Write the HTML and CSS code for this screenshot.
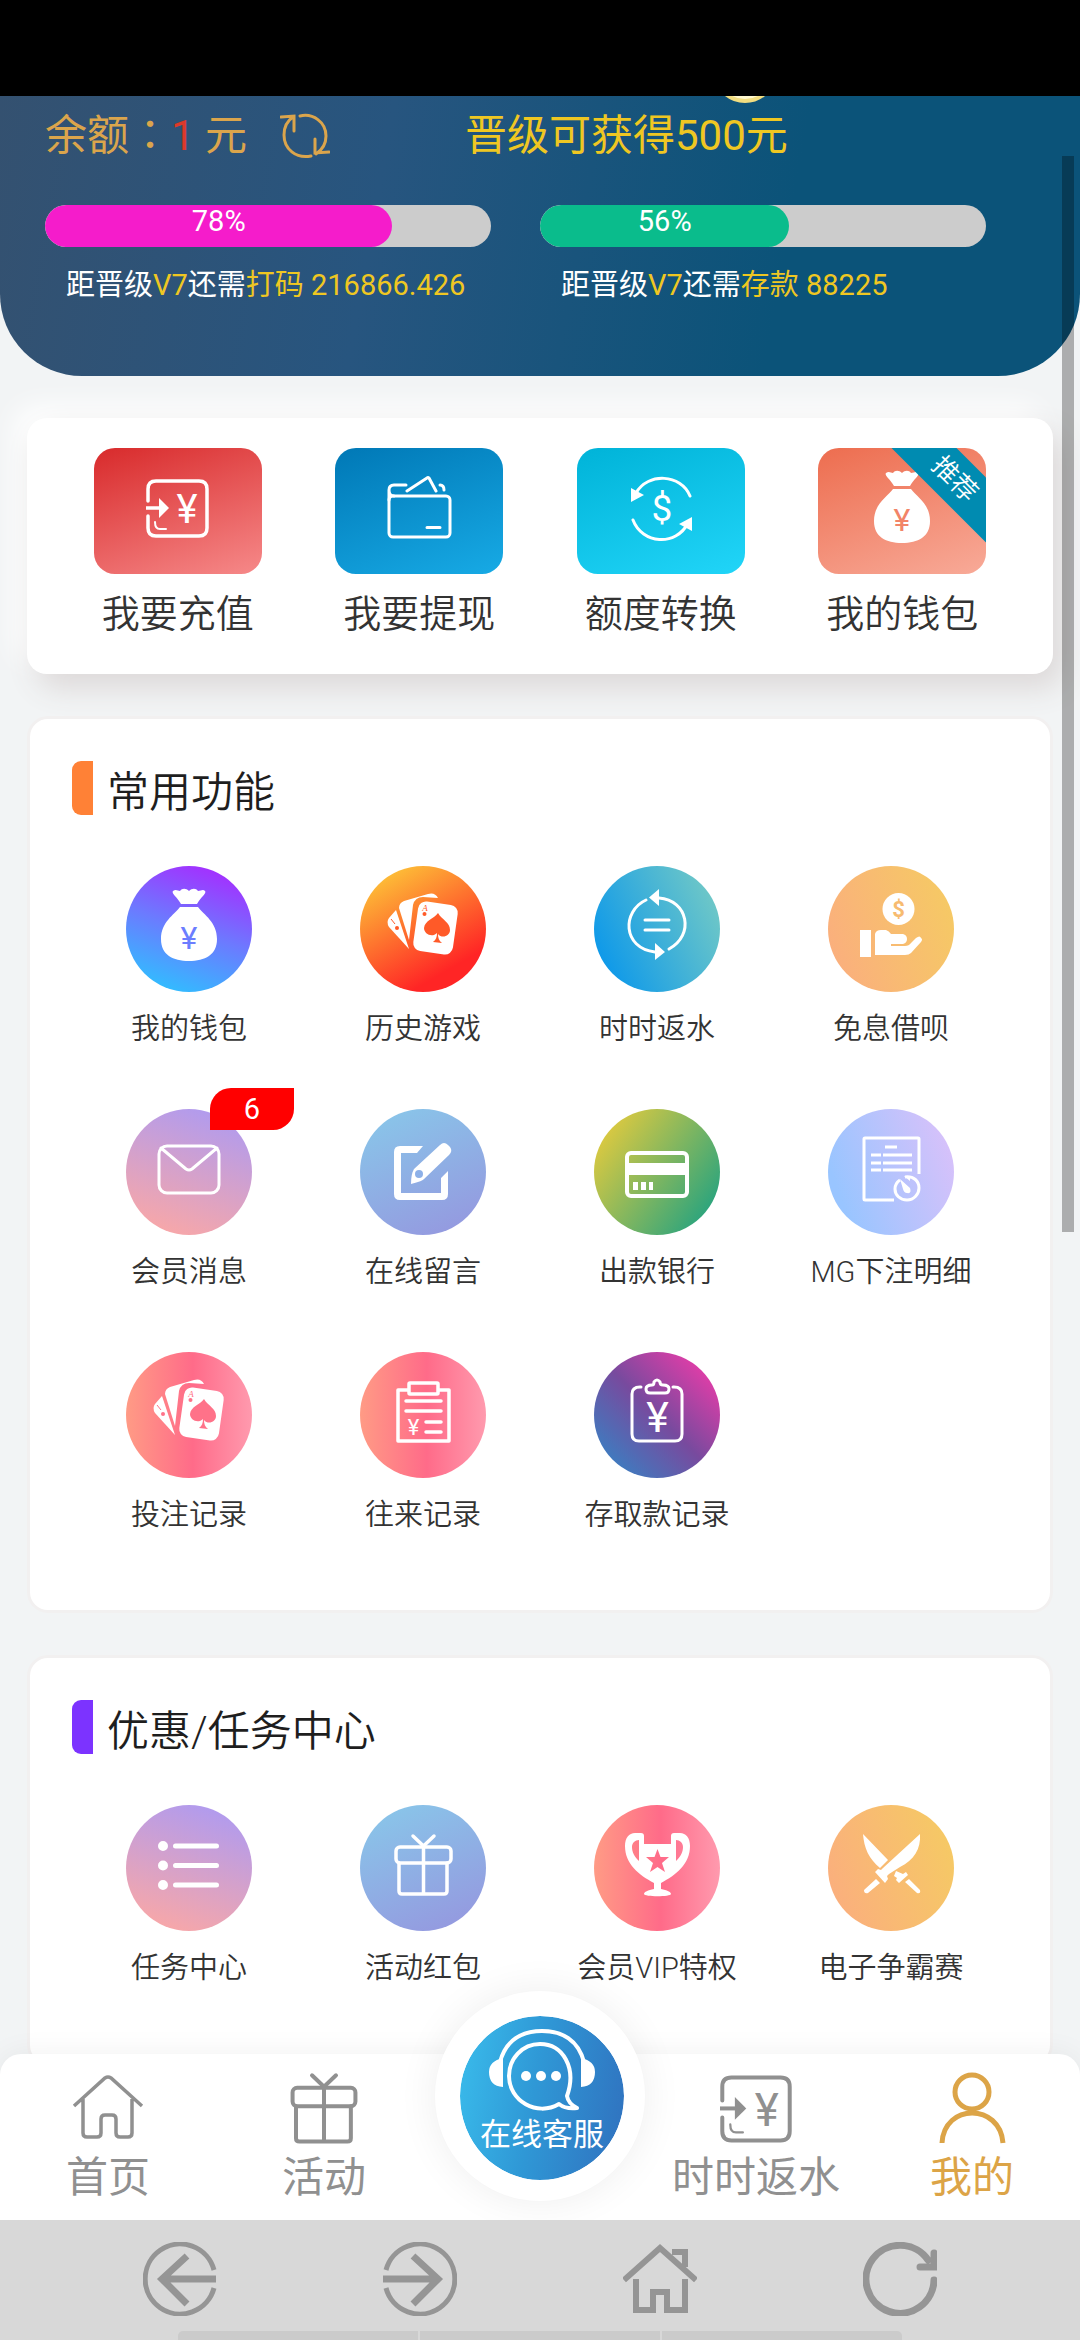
FILE: index.html
```html
<!DOCTYPE html>
<html lang="zh-CN">
<head>
  <meta charset="UTF-8">
  <meta name="viewport" content="width=device-width, initial-scale=1.0">
  <title>我的</title>
  <link rel="stylesheet" href="styles.css">
</head>
<body>
  <!-- 公用图标 -->
  <svg class="defs" aria-hidden="true">
    <defs>
      <g id="i-bag">
        <path class="fill" d="M47 25c3-2 5 0 7 0 2-3 6-3 9 0 3-3 7-3 9 0 3 0 5-2 7 0 2 2-4 6-8 13H55c-4-7-10-11-8-13z"/>
        <path class="fill" d="M54 41h18c6 8 19 15 19 32 0 16-12 22-28 22s-28-6-28-22c0-17 13-24 19-32z"/>
        <text class="cut" x="63" y="83" font-size="32" text-anchor="middle">¥</text>
      </g>
      <g id="i-cards">
        <path class="fill" d="M36 44l13 39-20-22q-3-5 0-9z"/>
        <path class="fill" d="M39 42q0-5 5-7l24-7q7-2 10 4l-15-1q-8 0-10 8l-4 35z"/>
        <rect class="fill" x="55.500" y="37" width="40" height="50" rx="8" transform="rotate(8 75.500 62)"/>
        <path class="cut" d="M78 47c4 7 12 9 12 17 0 6-8 9-12 4 0 4 1 7 4 9l-9-1c3-2 4-5 4-9-5 5-13 1-13-5 1-8 10-9 14-15z"/>
        <circle class="cut" cx="64.500" cy="48" r="2"/>
        <text class="cut serif" x="65" y="45" font-size="9" text-anchor="middle">A</text>
        <circle class="cut" cx="37" cy="62" r="2"/>
        <path d="M31 53l4 5" stroke="var(--cut)" stroke-width="1"/>
      </g>
      <g id="i-yencard" class="line">
        <path d="M33 53V41q0-8 8-8h43q8 0 8 8v39q0 8-8 8H41q-8 0-8-8V68"/>
        <path d="M31 60h14" stroke-linecap="butt"/>
        <path class="fill" stroke="none" d="M44 50l10 10-10 10z"/>
        <path d="M40 74q0 7 5 7h6" stroke-width="2"/>
        <text class="fill" stroke="none" x="72" y="75" font-size="40" text-anchor="middle">¥</text>
      </g>
      <g id="i-gift" class="line">
        <rect x="36" y="42" width="55" height="16" rx="4"/>
        <path d="M39 58v28q0 3 3 3h42q3 0 3-3V58M63.500 42v47M53 31l10.500 10L74 31"/>
      </g>
    </defs>
  </svg>

  <div class="app">
    <div class="status-bar"></div>

    <main class="content">
      <section class="vip">
        <div class="vip-coin"></div>
        <div class="vip-top">
          <div class="balance">
            <span>余额<span class="colon" lang="ja">：</span><b>1</b> 元</span>
            <button class="refresh" aria-label="刷新">
              <svg width="50" height="46" viewBox="0 0 50 46"><path d="M20 3c13-3 26 6 26 20 0 8-4 14-10 18M49 39l-14 1V26M31 43C16 46 4 36 4 22 4 14 7 8 13 4M1 4l13-1v15"/></svg>
            </button>
          </div>
          <div class="reward">晋级可获得500元</div>
        </div>
        <div class="vip-levels">
          <div class="level">
            <div class="bar"><div class="bar-in pink" style="width:78%">78%</div></div>
            <p>距晋级<em>V7</em>还需<em>打码 216866.426</em></p>
          </div>
          <div class="level">
            <div class="bar"><div class="bar-in green" style="width:56%">56%</div></div>
            <p>距晋级<em>V7</em>还需<em>存款 88225</em></p>
          </div>
        </div>
      </section>

      <nav class="quick">
        <a href="#"><span class="tile t-red"><svg viewBox="0 0 126 126"><use href="#i-yencard"/></svg></span>我要充值</a>
        <a href="#"><span class="tile t-blue"><svg viewBox="0 0 126 126">
          <g class="line thin"><rect x="33" y="48" width="61" height="41" rx="4"/><path d="M33 52V42q0-5 5-5h12M33 42q0 6 5 6M51 43l20-13q1-1 2 0l7 13M84 37q4 0 4 5M71 79.500h13"/></g></svg></span>我要提现</a>
        <a href="#"><span class="tile t-cyan"><svg viewBox="0 0 126 126">
          <g class="line thin"><path d="M92 48C83 26 50 24 38 45M35 72c9 24 43 27 55 3"/></g>
          <path class="fill" d="M33 40v14l13-7zM94 69v14l-13-7z"/>
          <text class="fill" x="64" y="73" font-size="37" text-anchor="middle">$</text></svg></span>额度转换</a>
        <a href="#"><span class="tile t-coral"><svg viewBox="0 0 126 126"><use href="#i-bag"/></svg><i class="ribbon">推荐</i></span>我的钱包</a>
      </nav>

      <section class="card">
        <h2 class="orange">常用功能</h2>
        <ul class="grid">
          <li><a href="#"><span class="icon c-purple"><svg viewBox="0 0 126 126"><use href="#i-bag"/></svg></span>我的钱包</a></li>
          <li><a href="#"><span class="icon c-fire"><svg viewBox="0 0 126 126"><use href="#i-cards"/></svg></span>历史游戏</a></li>
          <li><a href="#"><span class="icon c-sea"><svg viewBox="0 0 126 126">
            <g class="line thin"><path d="M52 34C28 45 28 82 61 86M65 32c29 2 36 37 10 51M51 54h24M51 64h24"/></g>
            <path class="fill" d="M55 31.500L65 23v17zM71 86l-10-9v17z"/></svg></span>时时返水</a></li>
          <li><a href="#"><span class="icon c-gold"><svg viewBox="0 0 126 126">
            <circle class="fill" cx="70.500" cy="43" r="16"/>
            <text class="cut bold" x="70.500" y="51" font-size="22" text-anchor="middle">$</text>
            <path class="fill" d="M32 64h11v27H32zM47 89V68q1-4 6-4h5q3 1 5 4h12q4 1 4 5t-4 5H63v2h14q4 0 6-3l5-5q4-3 5 0 2 1 0 4L83 87q-2 2-6 2z"/></svg></span>免息借呗</a></li>
          <li><a href="#"><span class="icon c-rose"><svg viewBox="0 0 126 126">
            <g class="line thin"><rect x="33" y="37" width="60" height="47" rx="8"/><path d="M35 39l25 21q3 2 6 0l25-21"/></g></svg><i class="badge">6</i></span>会员消息</a></li>
          <li><a href="#"><span class="icon c-sky"><svg viewBox="0 0 126 126">
            <path class="fill" d="M63 37l-6 7H41v40h40V69l7-7v23q0 6-6 6H40q-6 0-6-6V43q0-6 6-6z"/>
            <path class="fill" d="M54 60l26-24q4-4 8 0l2 2q3 4-1 8L64 70q-1 2-13 5 0-10 3-15z"/>
            <circle class="cut" cx="59" cy="65" r="4"/></svg></span>在线留言</a></li>
          <li><a href="#"><span class="icon c-lime"><svg viewBox="0 0 126 126">
            <rect x="33" y="44" width="60" height="43" rx="4" fill="none" stroke="#fff" stroke-width="4"/>
            <path class="fill" d="M32 54h62v12H32zM39 73h5v8h-5zM47 73h5v8h-5zM55 73h4v8h-4z"/></svg></span>出款银行</a></li>
          <li><a href="#"><span class="icon c-lilac"><svg viewBox="0 0 126 126">
            <g class="line thin square"><path d="M66 91H37q-1 0-1-1V30q0-1 1-1h53q1 0 1 1v35M57 38h12M43 46h10M55 46h29M43 54h10M55 54h29M43 61h10M55 61h29M77 68c9-1 14 4 14 11 0 6-5 12-12 12s-12-5-12-11c0-4 2-7 5-9"/></g>
            <path class="fill" d="M72 70l10 9q2 6-3 5-3 0-4-4zM76 67h6v5z"/></svg></span>MG下注明细</a></li>
          <li><a href="#"><span class="icon c-pink"><svg viewBox="0 0 126 126"><use href="#i-cards"/></svg></span>投注记录</a></li>
          <li><a href="#"><span class="icon c-pink"><svg viewBox="0 0 126 126">
            <g class="line"><path d="M48 38H38v51h51V38H79"/><rect x="49" y="31" width="29" height="11" rx="1"/><path d="M46 49h35M46 59h35M66 70h15M66 80h15"/></g>
            <text class="fill" x="53.500" y="83" font-size="22" text-anchor="middle">¥</text></svg></span>往来记录</a></li>
          <li><a href="#"><span class="icon c-night"><svg viewBox="0 0 126 126">
            <g class="line thin"><path d="M47 35h-1q-8 0-8 7v40q0 7 7 7h36q7 0 7-7V42q0-7-8-7h-1"/><path d="M56 41q-4 0-4-4t6-4q2 0 2-3 3-4 6 0 0 3 3 3 6 0 6 4t-4 4z"/></g>
            <text class="fill" x="63.500" y="80" font-size="43" text-anchor="middle">¥</text></svg></span>存取款记录</a></li>
        </ul>
      </section>

      <section class="card">
        <h2 class="violet">优惠/任务中心</h2>
        <ul class="grid">
          <li><a href="#"><span class="icon c-rose"><svg viewBox="0 0 126 126">
            <path class="fill" d="M32 41a5 5 0 1 1 10 0a5 5 0 1 1-10 0M32 60.500a5 5 0 1 1 10 0a5 5 0 1 1-10 0M32 80a5 5 0 1 1 10 0a5 5 0 1 1-10 0"/>
            <path d="M49.500 41h41M49.500 60.500h41M49.500 80h41" stroke="#fff" stroke-width="5" stroke-linecap="round"/></svg></span>任务中心</a></li>
          <li><a href="#"><span class="icon c-sky"><svg viewBox="0 0 126 126"><use href="#i-gift"/></svg></span>活动红包</a></li>
          <li><a href="#"><span class="icon c-pink"><svg viewBox="0 0 126 126">
            <path class="fill" fill-rule="evenodd" d="M50 39v-8q0-3-3-3h-6c-6 0-10 5-10 13 0 18 14 29 29 37v6c-6 1-10 3-10 5 0 3 27 3 27 0 0-2-4-4-10-5v-6c15-8 29-19 29-37 0-8-4-13-10-13h-6q-3 0-3 3v8zM45 35v21c-5-5-7-9-7-14 0-4 3-7 7-7zM82 35v21c5-5 7-9 7-14 0-4-3-7-7-7zM63.500 44l3 8h8.500l-7 6 3 9-7.500-5-7.500 5 3-9-7-6h8.500z"/></svg></span>会员VIP特权</a></li>
          <li><a href="#"><span class="icon c-gold"><svg viewBox="0 0 126 126">
            <path class="fill" d="M35 29l25 26-8 8C41 54 36 43 35 29zM92 29c1 15-6 26-20 33l-11 7-2 2 1 3-3 4-10-11 3-3 3 1 2-2zM48 74l4 4-12 10q-4 1-4-3zM68 66l7 3 3-2 2 3-9 8-3-3 1-2-3-2zM77 77l4-3 11 11q1 4-3 3z"/></svg></span>电子争霸赛</a></li>
        </ul>
      </section>
    </main>

    <nav class="tabbar">
      <a href="#"><svg viewBox="0 0 72 72"><path d="M2 33L33 5q3-2 6 0l31 28M11 26v34q0 4 4 4h10q4 0 4-4V46q0-4 4-4h7q4 0 4 4v14q0 4 4 4h8q4 0 4-4V26"/></svg>首页</a>
      <a href="#"><svg viewBox="32 29 63 63"><use href="#i-gift"/></svg>活动</a>
      <a href="#" class="service">
        <span class="service-in">
          <svg width="164" height="164" viewBox="0 0 164 164">
            <g fill="none" stroke="#fff" stroke-width="4" stroke-linejoin="round"><path d="M40 46c6-22 22-31 42-31s36 9 42 31"/><path d="M107 80c10-28-4-52-27-52-18 0-31 15-31 32 0 25 28 41 50 28 5 4 10 5 18 4-6-3-9-6-10-12z"/></g>
            <path fill="#fff" d="M43 42v29q-14-1-14-15 0-11 14-14zM121 42v29q14-1 14-15 0-11-14-14z"/>
            <circle fill="#fff" cx="66" cy="60" r="5"/><circle fill="#fff" cx="81" cy="60" r="5"/><circle fill="#fff" cx="96" cy="60" r="5"/>
          </svg>
          <span>在线客服</span>
        </span>
      </a>
      <a href="#"><svg viewBox="31 29 63 63"><use href="#i-yencard"/></svg>时时返水</a>
      <a href="#" class="active"><svg viewBox="0 0 72 72"><g stroke-width="5"><circle cx="36" cy="19" r="17"/><path d="M6 70c2-40 58-40 61 0"/></g></svg>我的</a>
    </nav>

    <div class="browser-bar">
      <button aria-label="后退"><svg viewBox="0 0 74 74"><path stroke-width="5" d="M71 28A35 35 0 1 0 71 46"/><path stroke-width="7" d="M73 37H20M44 14L19 37l25 25"/></svg></button>
      <button aria-label="前进"><svg viewBox="0 0 74 74"><path stroke-width="5" d="M3 28A35 35 0 1 1 3 46"/><path stroke-width="7" d="M0 37h54M30 14l25 23-25 25"/></svg></button>
      <button aria-label="主页"><svg viewBox="0 0 74 74"><path stroke-width="6" d="M1 38L37 6l36 32M49 10h13v15M13 37v31h17V50h14v18h18V37"/></svg></button>
      <button aria-label="刷新页面"><svg viewBox="0 0 74 74"><path stroke-width="7" stroke-linecap="round" d="M71 38A34 34 0 1 1 65 18M71 11v14H57"/></svg></button>
      <div class="strip"><i></i><i></i><i></i></div>
    </div>

    <div class="scroll-thumb"></div>
  </div>
</body>
</html>
```

FILE: styles.css
```css
*{
  margin: 0;
  padding: 0;
  box-sizing: border-box;
}
body{
  font-family: Roboto, "Noto Sans CJK SC", sans-serif;
  font-weight: 350;
  background-color: #f2f4f5;
  color: #333;
}
li{
  list-style: none;
}
a{
  color: inherit;
  text-decoration: none;
}
button{
  border: 0;
  background: none;
}
i,em{
  font-style: normal;
}
.defs{
  position: absolute;
  width: 0;
  height: 0;
}
.app{
  position: relative;
  display: flex;
  flex-direction: column;
  height: 100vh;
  overflow: hidden;
}
.status-bar{
  flex: none;
  height: 96px;
  background-color: #000;
}
/* 内容延伸到底部导航圆角下面 */
.content{
  flex: 1;
  min-height: 0;
  margin-bottom: -24px;
  overflow: hidden;
}

/* 图标 */
.fill{
  fill: var(--ink, #fff);
}
.cut{
  fill: var(--cut);
}
.bold{
  font-weight: 700;
}
.serif{
  font-family: "Liberation Serif", serif;
  font-style: italic;
}
.line{
  fill: none;
  stroke: var(--ink, #fff);
  stroke-width: 3.5;
  stroke-linecap: round;
  stroke-linejoin: round;
}
.thin{
  stroke-width: 3;
}
.square{
  stroke-linecap: butt;
}
svg text{
  font-weight: 400;
}

/* 会员信息 */
.vip{
  position: relative;
  padding: 10px 45px 70px;
  border-radius: 0 0 82px 82px;
  background: linear-gradient(100deg, #345170 0%, #27557f 35%, #0b5379 72%, #0b5379 100%);
  font-weight: 400;
}
.vip-coin{
  position: absolute;
  left: 69%;
  top: -57px;
  width: 64px;
  height: 64px;
  margin-left: -32px;
  border: 4px solid #f2dd80;
  border-radius: 50%;
  background-color: #fff8d0;
}
.vip-top{
  display: grid;
  grid-template-columns: 14fr 19fr;
  font-size: 42px;
  line-height: 60px;
}
.balance{
  display: flex;
  align-items: center;
  height: 60px;
  color: #dba54c;
}
.balance b{
  font-weight: 400;
  color: #dc392a;
}
/* 冒号居中显示 */
.colon{
  font-family: "Noto Sans CJK JP", sans-serif;
  line-height: 1;
}
.refresh{
  display: flex;
  margin-left: 33px;
}
.refresh path{
  fill: none;
  stroke: #dba54c;
  stroke-width: 3;
  stroke-linecap: round;
}
.reward{
  color: #efc722;
}
.vip-levels{
  display: flex;
  margin-top: 39px;
}
.level{
  flex: 1;
}
.bar{
  width: 90%;
  height: 42px;
  border-radius: 21px;
  background-color: #ccc;
  overflow: hidden;
}
.bar-in{
  height: 42px;
  border-radius: 21px;
  font-size: 29px;
  line-height: 32px;
  text-align: center;
  color: #fff;
}
.pink{
  background-color: #f51ccb;
}
.green{
  background-color: #0abc8c;
}
.level p{
  margin-top: 17px;
  padding-left: 21px;
  font-size: 29px;
  line-height: 42px;
  color: #fff;
  white-space: nowrap;
}
.level em{
  color: #efc722;
}

/* 快捷入口 */
.quick{
  display: flex;
  margin: 42px 27px;
  padding: 30px 30px 33px;
  border-radius: 20px;
  background-color: #fff;
  box-shadow: 10px 14px 30px #dcd8d8, -12px -12px 28px #fff;
}
.quick a{
  flex: 1;
  display: flex;
  flex-direction: column;
  align-items: center;
  font-size: 38px;
  line-height: 54px;
}
.tile{
  position: relative;
  width: 168px;
  height: 126px;
  margin-bottom: 13px;
  border-radius: 21px;
  overflow: hidden;
  text-align: center;
}
.tile svg,.icon svg{
  width: 126px;
  height: 126px;
}
.t-red{
  background: linear-gradient(160deg, #d82a2b, #f68989);
}
.t-blue{
  background: linear-gradient(160deg, #0078b6, #17aae5);
}
.t-cyan{
  background: linear-gradient(160deg, #00b3d8, #21d5f8);
}
.t-coral{
  --cut: #f28468;
  background: linear-gradient(160deg, #ed6d4f, #f8aa98);
}
.ribbon{
  position: absolute;
  left: 57px;
  top: 8px;
  width: 160px;
  height: 46px;
  font-size: 26px;
  line-height: 46px;
  text-align: center;
  color: #fff;
  background-color: #008bb1;
  transform: rotate(45deg);
}

/* 功能列表 */
.card{
  margin: 0 27px 42px;
  padding: 42px 42px 15px;
  border: 3px solid #f2f0f0;
  border-radius: 21px;
  background-color: #fff;
}
.card h2{
  display: flex;
  align-items: center;
  height: 54px;
  margin-bottom: 51px;
  font-size: 42px;
  font-weight: 350;
  color: #1e1e1e;
}
.card h2::before{
  content: "";
  width: 21px;
  height: 54px;
  margin-right: 14px;
  border-radius: 9px 0 0 9px;
  background-color: #ff8136;
}
.card .violet::before{
  background-color: #7c33ff;
}
.grid{
  display: grid;
  grid-template-columns: repeat(4, 1fr);
}
.grid a{
  display: flex;
  flex-direction: column;
  align-items: center;
  padding-bottom: 59px;
  font-size: 29px;
  line-height: 42px;
  white-space: nowrap;
}
.icon{
  position: relative;
  width: 126px;
  height: 126px;
  margin-bottom: 16px;
  border-radius: 50%;
}
.badge{
  position: absolute;
  left: 84px;
  top: -21px;
  width: 84px;
  height: 42px;
  border-radius: 21px 0;
  background-color: #f00;
  color: #fff;
  font-weight: 400;
  text-align: center;
}
.c-purple{
  --cut: #6c7dff;
  background: linear-gradient(200deg, #a62cff 8%, #6c7aff 50%, #2bc4ff 95%);
}
.c-fire{
  --cut: #ff5a28;
  background: linear-gradient(150deg, #fdc638 8%, #ff2525 78%);
}
.c-sea{
  background: linear-gradient(65deg, #0c98ea 10%, #72c9c6 92%);
}
.c-gold{
  --cut: #f7bb70;
  background: linear-gradient(70deg, #fbac80, #f5cc62);
}
.c-rose{
  background: linear-gradient(200deg, #b19bee 10%, #f7a7a9 90%);
}
.c-sky{
  --cut: #8db0e8;
  background: linear-gradient(155deg, #89c5e9 8%, #9597df 95%);
}
.c-lime{
  background: linear-gradient(125deg, #e5cb3d 8%, #26a37f 90%);
}
.c-lilac{
  background: linear-gradient(70deg, #99c5ff 15%, #d8c1fa 92%);
}
.c-pink{
  --cut: #ff7289;
  background: linear-gradient(90deg, #ff9b85, #ff6b89 53%, #ff9aae);
}
.c-night{
  background: linear-gradient(45deg, #3a7fc2 10%, #784a9e 50%, #e23da8 88%);
}

/* 底部导航 */
.tabbar{
  position: relative;
  z-index: 1;
  flex: none;
  display: flex;
  height: 166px;
  border-radius: 21px 21px 0 0;
  background-color: #fff;
  box-shadow: 0 0 30px rgba(0,0,0,.06);
}
.tabbar a{
  flex: 1;
  display: flex;
  flex-direction: column;
  align-items: center;
  padding-top: 19px;
  font-size: 42px;
  font-weight: 400;
  line-height: 50px;
  color: #909090;
  --ink: #909090;
}
.tabbar a > svg{
  width: 72px;
  height: 72px;
  margin-bottom: 8px;
  overflow: visible;
  fill: none;
  stroke: currentColor;
  stroke-width: 3.5;
  stroke-linecap: butt;
}
.tabbar .line{
  stroke-width: 3;
}
.tabbar .active{
  color: #dca447;
}
.tabbar .service{
  justify-content: center;
  padding: 0;
}
/* 客服按钮凸出导航栏 */
.service-in{
  position: absolute;
  top: -63px;
  width: 210px;
  height: 210px;
  border: solid #fff;
  border-width: 25px 21px 21px 25px;
  border-radius: 50%;
  background: linear-gradient(100deg, #3abdec, #2f98d6 45%, #3070be);
  background-clip: padding-box;
  background-color: #fff;
  box-shadow: 0 0 40px rgba(0,0,0,.07);
}
.service-in svg{
  display: block;
}
.service-in span{
  position: absolute;
  left: 0;
  right: 0;
  top: 101px;
  font-size: 31px;
  line-height: 36px;
  text-align: center;
  color: #fff;
}

/* 浏览器工具栏 */
.browser-bar{
  position: relative;
  z-index: 1;
  flex: none;
  display: flex;
  height: 120px;
  padding: 22px 60px 0;
  background-color: #d8d8d8;
}
.browser-bar button{
  flex: 1;
  height: 74px;
}
.browser-bar svg{
  width: 74px;
  height: 74px;
  fill: none;
  stroke: #959595;
}
.strip{
  position: absolute;
  left: 178px;
  right: 178px;
  bottom: 0;
  display: flex;
  gap: 2px;
  height: 9px;
  border-radius: 5px 5px 0 0;
  overflow: hidden;
}
.strip i{
  flex: 1;
  background-color: #cbcbcb;
}
.scroll-thumb{
  position: absolute;
  right: 6px;
  top: 156px;
  width: 12px;
  height: 46%;
  background-color: rgba(0,0,0,.29);
}
```
